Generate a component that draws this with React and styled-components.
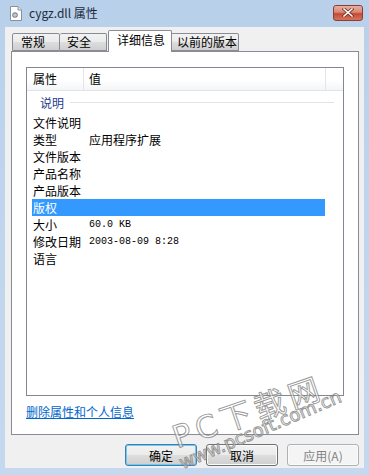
import React from 'react';
import styled, { createGlobalStyle } from 'styled-components';

const Global = createGlobalStyle`
  html, body { margin: 0; padding: 0; }
  body {
    width: 369px;
    height: 475px;
    overflow: hidden;
    font-family: "Noto Sans CJK SC", "DejaVu Sans", sans-serif;
    font-size: 12px;
    color: #000;
  }
`;

const props = [
  { name: '文件说明', value: '' },
  { name: '类型', value: '应用程序扩展' },
  { name: '文件版本', value: '' },
  { name: '产品名称', value: '' },
  { name: '产品版本', value: '' },
  { name: '版权', value: '', selected: true },
  { name: '大小', value: '60.0 KB', mono: true },
  { name: '修改日期', value: '2003-08-09 8:28', mono: true },
  { name: '语言', value: '' },
];

const tabs = [
  { label: '常规', width: 48, pad: 8 },
  { label: '安全', width: 47, pad: 7 },
  { label: '详细信息', width: 64, pad: 8, active: true },
  { label: '以前的版本', width: 68, pad: 6 },
];

const S = {
  Window: styled.div`
    position: relative;
    width: 369px;
    height: 475px;
    display: flex;
    flex-direction: column;
    background: linear-gradient(180deg, #b8d0ea 0%, #bfd5ed 40%, #c4d9ef 100%);
  `,
  TitleBar: styled.div`
    height: 27px;
    display: flex;
    align-items: center;
    padding: 0 6px 0 10px;
    box-sizing: border-box;
  `,
  TitleText: styled.span`
    margin-left: 7px;
    font-size: 12px;
    line-height: 14px;
    color: #1e2a3a;
    flex: 1;
    padding-bottom: 2px;
  `,
  CloseButton: styled.div`
    width: 30px;
    height: 16px;
    margin-bottom: 2px;
    box-sizing: border-box;
    border: 1px solid #8c3d33;
    border-radius: 3px;
    background: linear-gradient(180deg, #eab0a2 0%, #d98571 45%, #c44a36 55%, #d7735c 100%);
    display: flex;
    align-items: center;
    justify-content: center;
  `,
  Client: styled.div`
    flex: 1;
    margin: 0 5px 7px 5px;
    background: #f0f0f0;
    padding: 4px 5px 0 6px;
    display: flex;
    flex-direction: column;
  `,
  TabStrip: styled.div`
    height: 20px;
    display: flex;
    align-items: flex-end;
    padding-left: 1px;
    position: relative;
    z-index: 1;
  `,
  Tab: styled.div`
    box-sizing: border-box;
    width: ${(p) => p.$width}px;
    height: ${(p) => (p.$active ? 22 : 18)}px;
    margin-bottom: ${(p) => (p.$active ? -1 : 0)}px;
    margin-left: ${(p) => (p.$active ? 1 : 0)}px;
    margin-right: ${(p) => (p.$active ? -1 : 0)}px;
    padding-left: ${(p) => p.$pad}px;
    border: 1px solid #898c95;
    border-bottom: ${(p) => (p.$active ? 'none' : '1px solid #898c95')};
    border-left: ${(p) => (p.$first || p.$active ? '1px solid #898c95' : 'none')};
    border-radius: 2px 2px 0 0;
    background: ${(p) =>
      p.$active ? '#ffffff' : 'linear-gradient(180deg, #f2f2f2 0%, #ebebeb 50%, #dddddd 51%, #cfcfcf 100%)'};
    font-size: 12px;
    line-height: ${(p) => (p.$active ? 18 : 16)}px;
    white-space: nowrap;
    position: relative;
    z-index: ${(p) => (p.$active ? 2 : 1)};
  `,
  Panel: styled.div`
    box-sizing: border-box;
    width: 348px;
    height: 384px;
    border: 1px solid #898c95;
    background: #ffffff;
    padding: 15px 14px 0 14px;
  `,
  ListBox: styled.div`
    box-sizing: border-box;
    height: 329px;
    border: 1px solid #828790;
    background: #ffffff;
  `,
  Header: styled.div`
    height: 22px;
    display: flex;
    background: linear-gradient(180deg, #ffffff 0%, #ffffff 55%, #f4f5f7 100%);
    border-bottom: 1px solid #e3e4e6;
  `,
  HeaderCell: styled.div`
    box-sizing: border-box;
    width: ${(p) => p.$width}px;
    padding-left: ${(p) => p.$pad}px;
    border-right: ${(p) => (p.$sep ? '1px solid #e5e5e5' : 'none')};
    line-height: 22px;
    font-size: 12px;
  `,
  Group: styled.div`
    height: 23px;
    box-sizing: border-box;
    padding: 0 9px 0 13px;
    display: flex;
    align-items: center;
    gap: 6px;
  `,
  GroupLabel: styled.span`
    color: #1e3a8c;
    font-size: 12px;
  `,
  GroupLine: styled.div`
    flex: 1;
    height: 1px;
    background: #e2e3e6;
  `,
  Row: styled.div`
    width: 293px;
    height: 17px;
    margin-left: 5px;
    display: flex;
    align-items: center;
    background: ${(p) => (p.$selected ? '#3399ff' : 'transparent')};
    color: ${(p) => (p.$selected ? '#ffffff' : '#000000')};
  `,
  Name: styled.span`
    width: 56px;
    padding-left: 1px;
    font-size: 12px;
    white-space: nowrap;
  `,
  Value: styled.span`
    font-family: ${(p) =>
      p.$mono ? '"Liberation Mono", monospace' : '"Noto Sans CJK SC", sans-serif'};
    font-size: ${(p) => (p.$mono ? 10 : 12)}px;
    white-space: nowrap;
  `,
  Link: styled.a`
    display: inline-block;
    margin-top: 9px;
    color: #0066cc;
    text-decoration: underline;
    font-size: 12px;
    line-height: 14px;
  `,
  ButtonRow: styled.div`
    margin-top: 9px;
    display: flex;
    justify-content: flex-end;
    gap: 9px;
  `,
  Button: styled.div`
    box-sizing: border-box;
    width: 72px;
    height: 22px;
    border-radius: 3px;
    border: 1px solid ${(p) => (p.$default ? '#3c7fb1' : p.$disabled ? '#adb2b5' : '#707070')};
    box-shadow: ${(p) => (p.$default ? 'inset 0 0 0 1px #6fc9f0' : 'inset 0 0 0 1px #fbfbfb')};
    background: ${(p) =>
      p.$disabled
        ? '#f4f4f4'
        : 'linear-gradient(180deg, #f2f2f2 0%, #ebebeb 50%, #dddddd 51%, #cfcfcf 100%)'};
    color: ${(p) => (p.$disabled ? '#838383' : '#000')};
    display: flex;
    align-items: center;
    justify-content: center;
    font-size: 12px;
  `,
  Watermark: styled.div`
    position: absolute;
    left: ${(p) => p.$x}px;
    top: ${(p) => p.$y}px;
    transform: rotate(${(p) => p.$angle}deg);
    transform-origin: left bottom;
    font-family: "DejaVu Sans", "Noto Sans CJK SC", sans-serif;
    font-size: ${(p) => p.$size}px;
    letter-spacing: ${(p) => p.$spacing}px;
    color: rgba(255, 255, 255, 0.55);
    -webkit-text-stroke: 1px rgba(120, 120, 120, 0.75);
    white-space: nowrap;
    pointer-events: none;
  `,
};

const FileIcon = () => (
  <svg width="12" height="15" viewBox="0 0 12 15">
    <path d="M0.5 0.5 H8 L11.5 4 V14.5 H0.5 Z" fill="#fff" stroke="#8a8f99" />
    <path d="M8 0.5 V4 H11.5" fill="#e6e9ee" stroke="#8a8f99" />
    <circle cx="5" cy="9" r="2.2" fill="none" stroke="#6f7f95" strokeWidth="1.2" />
    <circle cx="5" cy="9" r="0.8" fill="#6f7f95" />
  </svg>
);

const CloseIcon = () => (
  <svg width="12" height="9" viewBox="0 0 12 9">
    <path d="M2 1 L10 8 M10 1 L2 8" stroke="#6b2a20" strokeWidth="3" strokeLinecap="square" />
    <path d="M2 1 L10 8 M10 1 L2 8" stroke="#ffffff" strokeWidth="1.6" strokeLinecap="square" />
  </svg>
);

const App = () => {
  return (
    <>
      <Global />
      <S.Window>
        <S.TitleBar>
          <FileIcon />
          <S.TitleText>cygz.dll 属性</S.TitleText>
          <S.CloseButton>
            <CloseIcon />
          </S.CloseButton>
        </S.TitleBar>
        <S.Client>
          <S.TabStrip>
            {tabs.map((t, i) => (
              <S.Tab key={t.label} $width={t.width} $pad={t.pad} $active={t.active} $first={i === 0}>
                {t.label}
              </S.Tab>
            ))}
          </S.TabStrip>
          <S.Panel>
            <S.ListBox>
              <S.Header>
                <S.HeaderCell $width={57} $pad={6} $sep>
                  属性
                </S.HeaderCell>
                <S.HeaderCell $width={242} $pad={5} $sep>
                  值
                </S.HeaderCell>
                <S.HeaderCell $width={17} $pad={0} />
              </S.Header>
              <S.Group>
                <S.GroupLabel>说明</S.GroupLabel>
                <S.GroupLine />
              </S.Group>
              {props.map((r) => (
                <S.Row key={r.name} $selected={r.selected}>
                  <S.Name>{r.name}</S.Name>
                  <S.Value $mono={r.mono}>{r.value}</S.Value>
                </S.Row>
              ))}
            </S.ListBox>
            <S.Link>删除属性和个人信息</S.Link>
          </S.Panel>
          <S.ButtonRow>
            <S.Button $default>确定</S.Button>
            <S.Button>取消</S.Button>
            <S.Button $disabled>应用(A)</S.Button>
          </S.ButtonRow>
        </S.Client>
        <S.Watermark $x={180} $y={412} $angle={-19} $size={31} $spacing={5}>
          PC下载网
        </S.Watermark>
        <S.Watermark $x={184} $y={452} $angle={-23} $size={18} $spacing={0}>
          www.pcsoft.com.cn
        </S.Watermark>
      </S.Window>
    </>
  );
};

export default App;
